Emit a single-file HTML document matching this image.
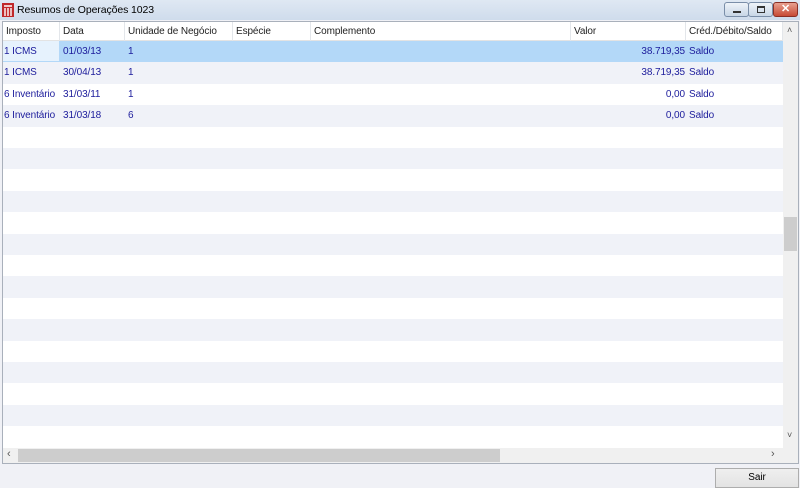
<!DOCTYPE html>
<html><head><meta charset="utf-8"><style>
*{margin:0;padding:0;box-sizing:border-box}
body{width:800px;height:488px;background:#f0f1f6;font-family:"Liberation Sans",sans-serif;font-size:10px;letter-spacing:-0.1px;position:relative;overflow:hidden;color:#000}
.title{position:absolute;left:0;top:0;width:800px;height:20px;background:linear-gradient(#dfe8f3,#cfdcec)}
.title span{position:absolute;left:17px;top:4px;font-size:10.5px;color:#000}
.grid{position:absolute;left:2px;top:21px;width:797px;height:443px;border:1px solid #a9b0bb;background:#fff;overflow:hidden}
.hdr{position:absolute;left:0;top:0;width:780px;height:19px;background:#fff;border-bottom:1px solid #e3e3e3}
.hdr div{position:absolute;top:0;height:19px;line-height:20px;padding-left:3px;border-right:1px solid #e3e6ea;color:#222}
.row{position:absolute;left:0;width:780px;height:21.4px;line-height:21.4px;color:#1c1c9c}
.row div{position:absolute;top:0;padding-left:3px;white-space:nowrap}
.alt{background:#f0f2f8}
.sel{background:#b3d8f8}
.vs{position:absolute;left:780px;top:0;width:15px;height:426px;background:#f0f0f0}
.hs{position:absolute;left:0;top:426px;width:795px;height:15px;background:#f0f0f0}
.btn{position:absolute;left:715px;top:468px;width:84px;height:20px;background:linear-gradient(#efefef,#e3e3e3);border:1px solid #adadad;text-align:center;line-height:18px;font-size:10px}
.wb{position:absolute;top:2px;height:15px;border:1px solid #7a8ea8;border-radius:3px;background:linear-gradient(#eef3f9,#c8d6e6)}
</style></head><body>
<div class="title">
<svg style="position:absolute;left:2px;top:3px" width="12" height="14" viewBox="0 0 12 14"><rect x="0" y="0" width="12" height="14" fill="#c0282b"/><path d="M2 3h8M3 5v8M6 5v8M9 5v8" stroke="#fff" stroke-width="1.4"/></svg>
<span>Resumos de Operações 1023</span>
<div class="wb" style="left:724px;width:25px"><div style="position:absolute;left:8px;top:8px;width:8px;height:2px;background:#333"></div></div>
<div class="wb" style="left:748px;width:25px"><div style="position:absolute;left:8px;top:3px;width:8px;height:7px;border:1px solid #333;border-top-width:2px"></div></div>
<div class="wb" style="left:773px;width:25px;border-color:#8a2f25;background:linear-gradient(#e8a08f,#c74a35);color:#fff;text-align:center;line-height:13px;font-weight:bold;font-size:11px">✕</div>
</div>
<div class="grid">
<div class="hdr">
<div style="left:0;width:57px">Imposto</div>
<div style="left:57px;width:65px">Data</div>
<div style="left:122px;width:108px">Unidade de Negócio</div>
<div style="left:230px;width:78px">Espécie</div>
<div style="left:308px;width:260px">Complemento</div>
<div style="left:568px;width:115px">Valor</div>
<div style="left:683px;width:97px">Créd./Débito/Saldo</div>
</div>
<div id="rows"></div>
<div class="vs"><div style="position:absolute;left:4px;top:3px;font-size:9px;color:#555">˄</div><div style="position:absolute;left:1px;top:195px;width:13px;height:34px;background:#cdcdcd"></div><div style="position:absolute;left:4px;top:408px;font-size:9px;color:#555">˅</div></div>
<div class="hs"><div style="position:absolute;left:4px;top:0px;font-size:11px;color:#555">‹</div><div style="position:absolute;left:15px;top:1px;width:482px;height:13px;background:#cdcdcd"></div><div style="position:absolute;left:768px;top:0;font-size:11px;color:#555">›</div></div>
</div>
<div class="btn">Sair</div>
<script>
var d=[["1 ICMS","01/03/13","1","38.719,35"],["1 ICMS","30/04/13","1","38.719,35"],["6 Inventário","31/03/11","1","0,00"],["6 Inventário","31/03/18","6","0,00"]];
var h="";
for(var i=0;i<19;i++){var c=i==0?"row sel":(i%2?"row alt":"row");var t=19+i*21.4;h+='<div class="'+c+'" style="top:'+t+'px">';
if(d[i]){var r=d[i];h+=(i==0?'<div style="left:0;width:56px;background:#e6f2fd;height:20px;padding-left:1px">':'<div style="left:0;padding-left:1px">')+r[0]+'</div><div style="left:57px">'+r[1]+'</div><div style="left:122px">'+r[2]+'</div><div style="left:568px;width:115px;text-align:right;padding-right:1px">'+r[3]+'</div><div style="left:683px">Saldo</div>';}
h+='</div>';}
document.getElementById("rows").innerHTML=h;
</script>
</body></html>
